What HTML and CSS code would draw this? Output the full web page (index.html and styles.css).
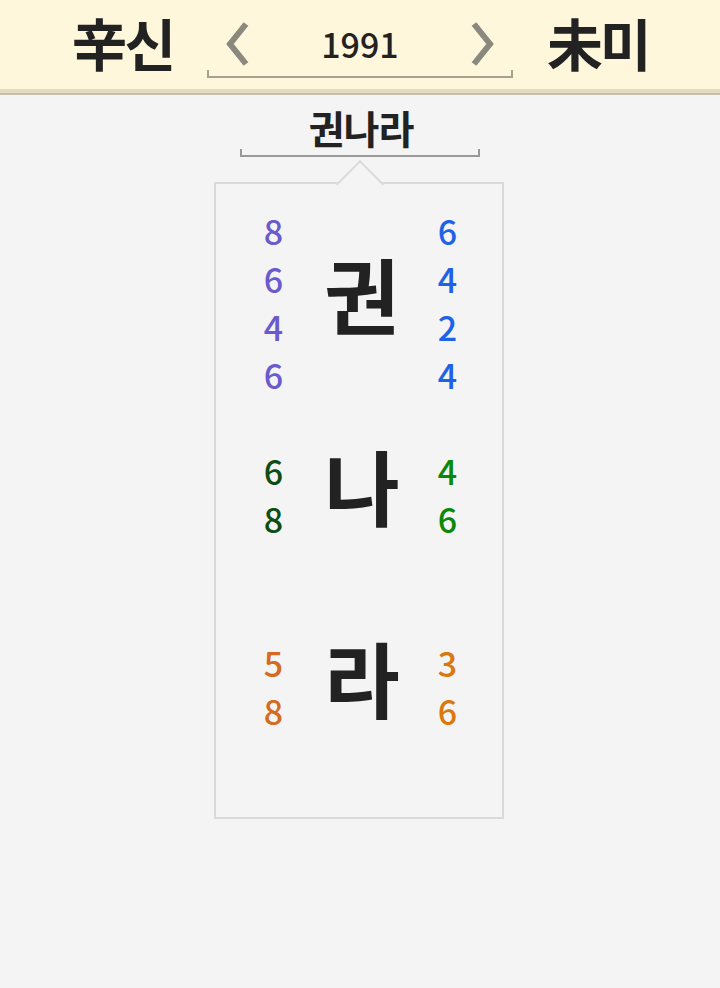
FILE: index.html
```html
<!DOCTYPE html>
<html lang="ko">
<head>
<meta charset="utf-8">
<link rel="stylesheet" href="styles.css">
</head>
<body>
<header class="top">
  <div class="gz">辛신</div>
  <div class="nav">
    <div class="nav-row">
      <svg class="chev" viewBox="0 0 24 44" width="24" height="44"><polyline points="20,2 4,22 20,42" fill="none" stroke="#8a897e" stroke-width="6"/></svg>
      <span class="year">1991</span>
      <svg class="chev" viewBox="0 0 24 44" width="24" height="44"><polyline points="4,2 20,22 4,42" fill="none" stroke="#8a897e" stroke-width="6"/></svg>
    </div>
    <div class="nav-bracket"></div>
  </div>
  <div class="gz">未미</div>
</header>
<main class="main">
  <div class="name">권나라</div>
  <div class="name-bracket"></div>
  <section class="card">
    <div class="row">
      <div class="nums c-purple"><span>8</span><span>6</span><span>4</span><span>6</span></div>
      <div class="ch">권</div>
      <div class="nums c-blue"><span>6</span><span>4</span><span>2</span><span>4</span></div>
    </div>
    <div class="row">
      <div class="nums c-dgreen"><span>6</span><span>8</span></div>
      <div class="ch">나</div>
      <div class="nums c-green"><span>4</span><span>6</span></div>
    </div>
    <div class="row">
      <div class="nums c-orange"><span>5</span><span>8</span></div>
      <div class="ch">라</div>
      <div class="nums c-orange2"><span>3</span><span>6</span></div>
    </div>
  </section>
</main>
</body>
</html>
```
FILE: styles.css
```css
* { box-sizing: border-box; }
html, body { margin: 0; padding: 0; }
body {
  background: #f4f4f4;
  font-family: "Noto Sans CJK KR", "Noto Sans", sans-serif;
  color: #222;
  width: 720px;
  height: 988px;
  overflow: hidden;
}
.top {
  height: 93px;
  background: #fef7dc;
  border-bottom: 4px solid #e2dbc0;
  box-shadow: 0 2px 0 #c4bfab;
  display: flex;
  align-items: center;
  justify-content: center;
  gap: 34px;
  padding-left: 0;
}
.gz {
  font-size: 56px;
  font-weight: 700;
  line-height: 60px;
  letter-spacing: -3px;
  margin-top: -6px;
}
.nav {
  width: 306px;
  display: flex;
  flex-direction: column;
  margin-top: 10px;
}
.nav-row {
  display: flex;
  align-items: center;
  justify-content: space-between;
  padding: 0 19px 0 19px;
  height: 46px;
}
.year {
  font-size: 34px;
  font-weight: 500;
  line-height: 40px;
}
.nav-bracket {
  height: 8px;
  border: 2px solid #a6a28e;
  border-top: none;
  margin-top: 3px;
}
.main {
  display: flex;
  flex-direction: column;
  align-items: center;
  padding-top: 12px;
}
.name {
  font-size: 39px;
  font-weight: 700;
  line-height: 44px;
  letter-spacing: -1px;
  margin-left: 2px;
}
.name-bracket {
  width: 240px;
  height: 8px;
  border: 2px solid #999;
  border-top: none;
  margin-top: 0px;
}
.card {
  position: relative;
  margin-top: 25px;
  width: 290px;
  margin-left: -2px;
  border: 2px solid #dadada;
  padding: 23px 0 34px;
  display: flex;
  flex-direction: column;
}
.card::before {
  content: "";
  position: absolute;
  top: -17px;
  left: 127px;
  width: 32px;
  height: 32px;
  background: #f4f4f4;
  border-top: 2px solid #dadada;
  border-left: 2px solid #dadada;
  transform: rotate(45deg);
}
.row {
  height: 192px;
  display: grid;
  grid-template-columns: 115px 62px 109px;
  align-items: center;
}
.nums {
  display: flex;
  flex-direction: column;
  align-items: center;
  font-size: 34px;
  line-height: 48px;
  font-weight: 500;
}
.ch {
  font-size: 82px;
  font-weight: 700;
  line-height: 1;
  text-align: center;
  margin-top: -20px;
  white-space: nowrap;
  display: flex;
  justify-content: center;
}
.c-purple { color: #6a5acd; }
.c-blue { color: #1f62e8; }
.c-dgreen { color: #0e4d12; }
.c-green { color: #0a880a; }
.c-orange { color: #d46b20; }
.c-orange2 { color: #d9780c; }
```
